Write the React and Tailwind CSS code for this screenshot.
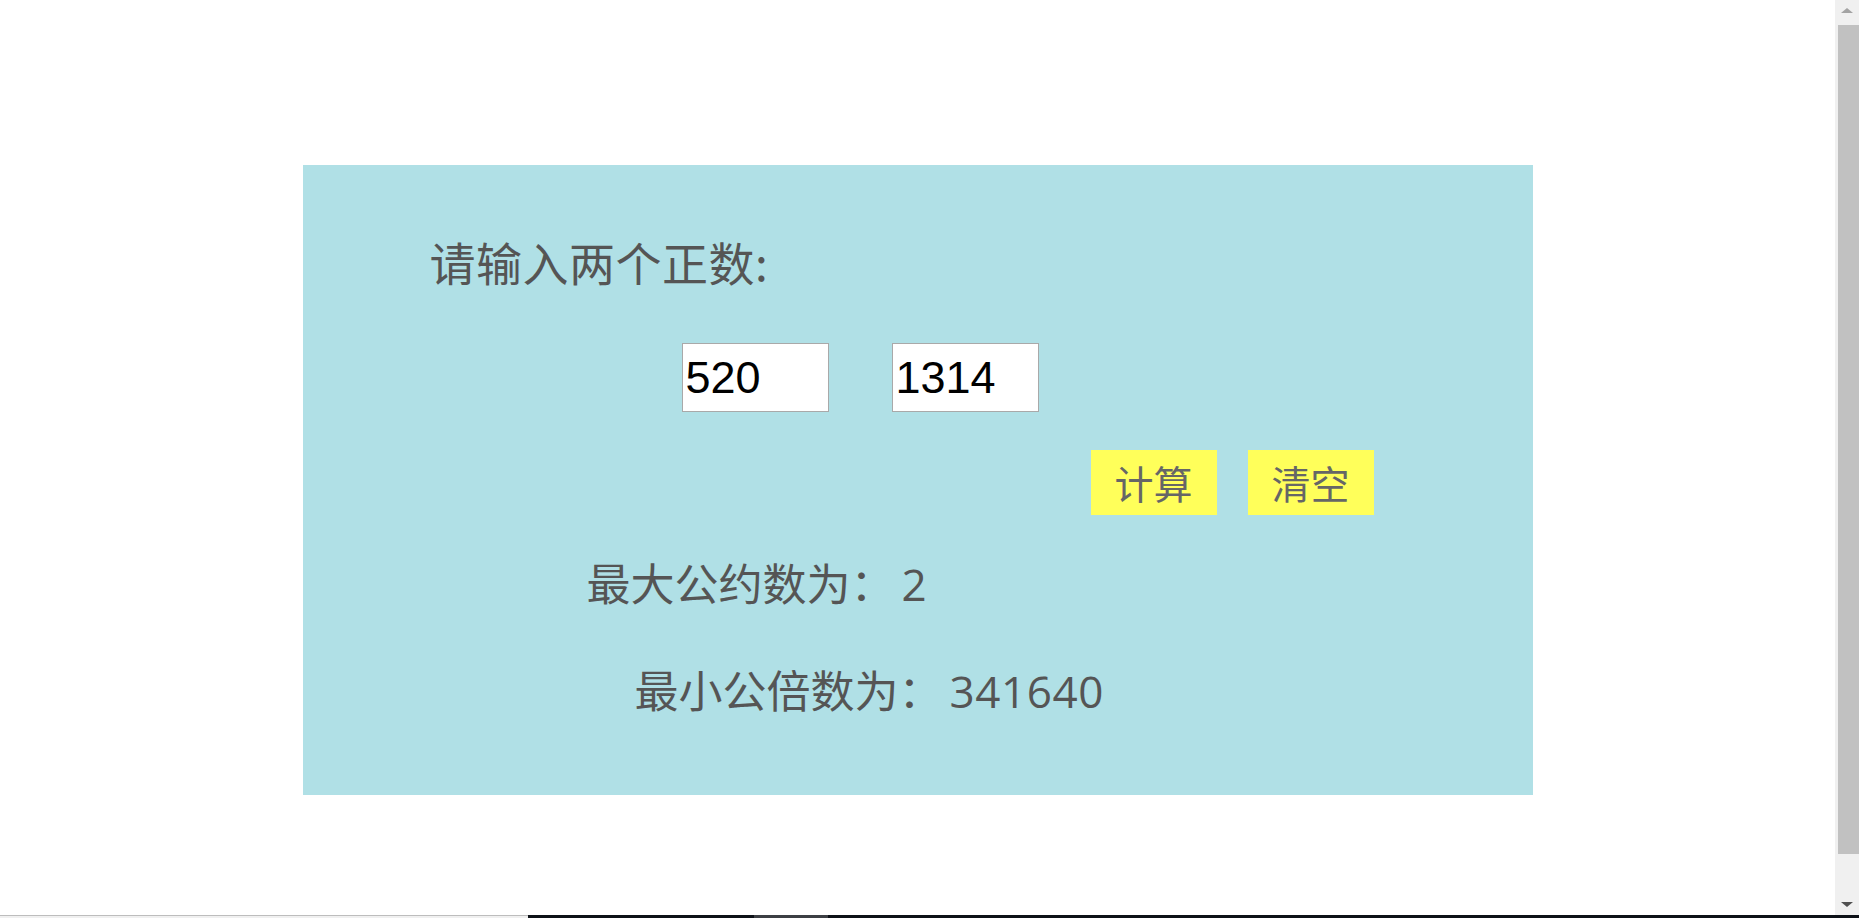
import { useState } from 'react';

const CJK = { fontFamily: '"Noto Sans CJK SC", "Noto Sans", sans-serif' };
const NUM = { fontFamily: '"Open Sans", "Noto Sans CJK SC", sans-serif' };

function gcd(a, b) {
  while (b) [a, b] = [b, a % b];
  return a;
}

export default function App() {
  const [a, setA] = useState('520');
  const [b, setB] = useState('1314');
  const [res, setRes] = useState({ g: '2', l: '341640' });

  const calc = () => {
    const x = parseInt(a, 10);
    const y = parseInt(b, 10);
    if (!(x > 0 && y > 0)) return;
    const g = gcd(x, y);
    setRes({ g: String(g), l: String((x / g) * y) });
  };

  const clear = () => {
    setA('');
    setB('');
    setRes({ g: '', l: '' });
  };

  return (
    <div className="w-full h-[918px] flex flex-col bg-white overflow-hidden">
      <div className="flex flex-1 min-h-0">
        <div className="flex-1 flex flex-col">
          <div
            className="mt-[165px] mx-auto w-[1230px] h-[630px] bg-[#b0e0e6] flex flex-col text-[#555555]"
            style={CJK}
          >
            <div className="mt-[73px] ml-[127px] text-[46px] leading-[46px] tracking-[0.5px]">请输入两个正数:</div>

            <div className="mt-[59px] ml-[379px] flex gap-[63px]">
              <NumInput value={a} onChange={setA} />
              <NumInput value={b} onChange={setB} />
            </div>

            <div className="mt-[38px] ml-[788px] flex gap-[31px]">
              <YellowButton onClick={calc}>计算</YellowButton>
              <YellowButton onClick={clear}>清空</YellowButton>
            </div>

            <div className="mt-[45px] ml-[284px] text-[44px] leading-[45px] whitespace-nowrap">
              最大公约数为：<span className="ml-[7px] tracking-[0.6px]" style={NUM}>{res.g}</span>
            </div>
            <div className="mt-[60px] ml-[332px] text-[44px] leading-[45px] whitespace-nowrap">
              最小公倍数为：<span className="ml-[7px] tracking-[0.6px]" style={NUM}>{res.l}</span>
            </div>
          </div>
        </div>

        {/* fake browser scrollbar */}
        <div className="w-[24px] bg-[#f0f0f0] flex flex-col items-center">
          <div className="h-[25px] flex items-center justify-center pb-[4px]">
            <div className="w-0 h-0 border-l-[6px] border-r-[6px] border-b-[5px] border-l-transparent border-r-transparent border-b-[#a3a3a3]" />
          </div>
          <div className="ml-[2px] w-[21px] h-[829px] bg-[#c1c1c1]" />
          <div className="flex-1 flex items-end justify-center pb-[8px]">
            <div className="w-0 h-0 border-l-[6px] border-r-[6px] border-t-[5px] border-l-transparent border-r-transparent border-t-[#505050]" />
          </div>
        </div>
      </div>

      <div className="h-[3px] flex">
        <div className="w-[528px] bg-[#f0f0f0] border-t border-[#bdbdbd]" />
        <div className="w-[226px] bg-[#0d1117]" />
        <div className="w-[74px] bg-[#3c3f44]" />
        <div className="flex-1 bg-[#0d1117]" />
      </div>
    </div>
  );
}

function NumInput({ value, onChange }) {
  return (
    <input
      type="text"
      value={value}
      onChange={(e) => onChange(e.target.value)}
      className="w-[147px] h-[69px] bg-white border border-[#a9a9a9] pl-[3px] text-black text-[45px] leading-none outline-none"
      style={{ fontFamily: '"Liberation Sans", Arial, sans-serif' }}
    />
  );
}

function YellowButton({ children, onClick }) {
  return (
    <button
      onClick={onClick}
      className="w-[126px] h-[65px] bg-[#ffff5a] text-[#666666] text-[39px] leading-none flex items-center justify-center"
    >
      {children}
    </button>
  );
}
